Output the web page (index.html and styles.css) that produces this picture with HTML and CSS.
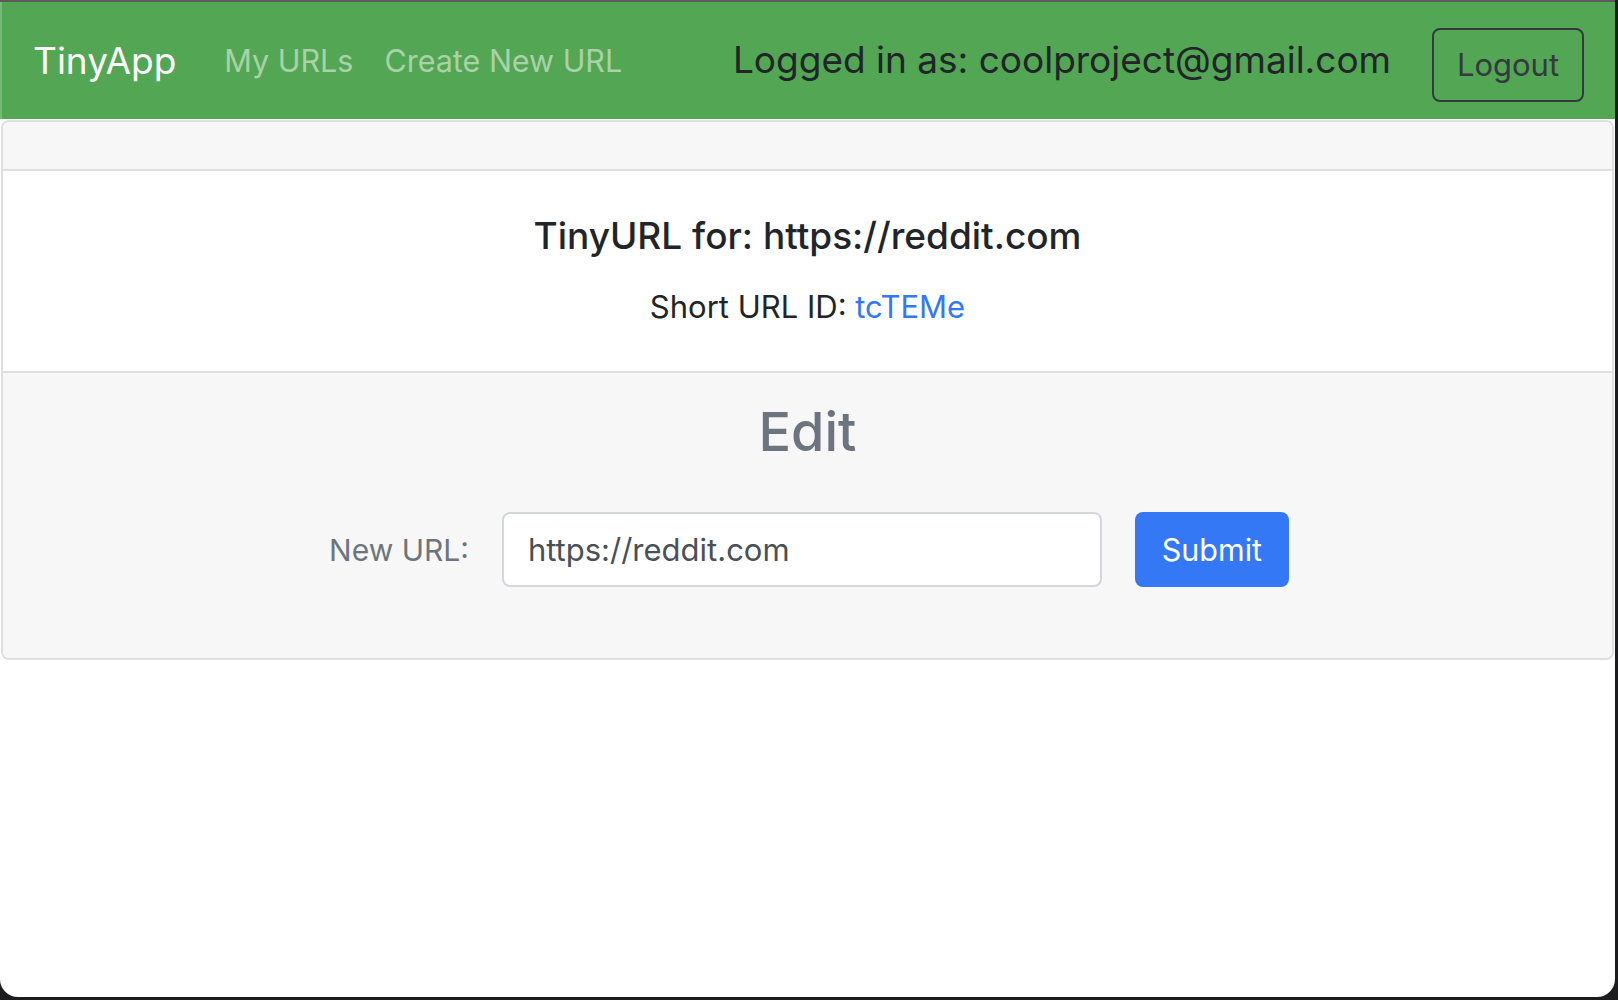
FILE: index.html
```html
<!DOCTYPE html>
<html lang="en">
<head>
<meta charset="utf-8">
<title>TinyApp</title>
<link rel="stylesheet" href="styles.css">
</head>
<body>
<div class="window">
  <nav class="navbar">
    <a class="brand" href="#">TinyApp</a>
    <a class="nav-link" href="#">My URLs</a>
    <a class="nav-link" href="#">Create New URL</a>
    <span class="logged">Logged in as: coolproject@gmail.com</span>
    <button class="logout" type="button">Logout</button>
  </nav>
  <div class="card">
    <div class="card-header"></div>
    <div class="card-body">
      <h5 class="card-title">TinyURL for: https://reddit.com</h5>
      <p class="card-text">Short URL ID: <a href="#">tcTEMe</a></p>
    </div>
    <div class="card-footer">
      <h2 class="edit-title">Edit</h2>
      <form class="edit-form">
        <label class="form-label" for="longURL">New URL:</label>
        <input class="form-control" id="longURL" type="text" value="https://reddit.com">
        <button class="btn-submit" type="submit">Submit</button>
      </form>
    </div>
  </div>
</div>
</body>
</html>
```

FILE: styles.css
```css
html {
  background: #1c1c1e;
}
body {
  margin: 0;
  font-family: Inter, "Liberation Sans", sans-serif;
  color: #212529;
}
.window {
  width: 1615px;
  height: 995px;
  background: #ffffff;
  border-top: 2px solid #5b5b5b;
  border-radius: 0 0 18px 18px;
  overflow: hidden;
}
.navbar {
  height: 117px;
  background: #53a653;
  border-left: 2px solid #76b976;
  display: flex;
  align-items: center;
  padding: 0 31px 0 31px;
}
.brand {
  font-size: 37px;
  color: #ffffff;
  text-decoration: none;
  margin-right: 48px;
  margin-top: 0;
}
.nav-link {
  font-size: 30.5px;
  color: rgba(255, 255, 255, 0.5);
  text-decoration: none;
  margin-right: 31px;
  margin-top: 0;
}
.logged {
  margin-left: auto;
  font-size: 37px;
  color: #212529;
  margin-top: -3px;
}
.logout {
  margin-left: 41px;
  width: 152px;
  height: 74px;
  margin-top: 8px;
  border: 2px solid #343a40;
  border-radius: 8px;
  background: transparent;
  color: #343a40;
  font-family: inherit;
  font-size: 31px;
  padding: 0;
}
.card {
  margin: 1px 1px 0 1px;
  border: 2px solid #dfdfdf;
  border-radius: 8px;
}
.card-header {
  height: 47px;
  background: #f7f7f7;
  border-bottom: 2px solid #dfdfdf;
  border-radius: 6px 6px 0 0;
}
.card-body {
  height: 200px;
  box-sizing: border-box;
  padding-top: 41px;
  text-align: center;
}
.card-title {
  margin: 0;
  font-size: 37px;
  font-weight: 500;
  line-height: 48px;
}
.card-text {
  margin: 27px 0 0;
  font-size: 31px;
  line-height: 40px;
}
.card-text a {
  color: #3478f6;
  text-decoration: none;
}
.card-footer {
  height: 287px;
  box-sizing: border-box;
  background: #f7f7f7;
  border-top: 2px solid #dfdfdf;
  border-radius: 0 0 6px 6px;
  padding-top: 23px;
  text-align: center;
}
.edit-title {
  margin: 0;
  font-size: 54px;
  font-weight: 500;
  line-height: 72px;
  color: #6c757d;
}
.edit-form {
  margin-top: 44px;
  display: flex;
  justify-content: center;
  align-items: center;
  gap: 33px;
  padding-left: 3px;
}
.form-label {
  font-size: 30px;
  color: #6c757d;
}
.form-control {
  width: 600px;
  height: 75px;
  box-sizing: border-box;
  border: 2px solid #d3d6da;
  border-radius: 8px;
  background: #ffffff;
  padding: 0 24px;
  font-family: inherit;
  font-size: 31px;
  color: #495057;
}
.btn-submit {
  width: 154px;
  height: 75px;
  border: none;
  border-radius: 8px;
  background: #3478f6;
  color: #ffffff;
  font-family: inherit;
  font-size: 30.5px;
  padding: 0;
}
```
